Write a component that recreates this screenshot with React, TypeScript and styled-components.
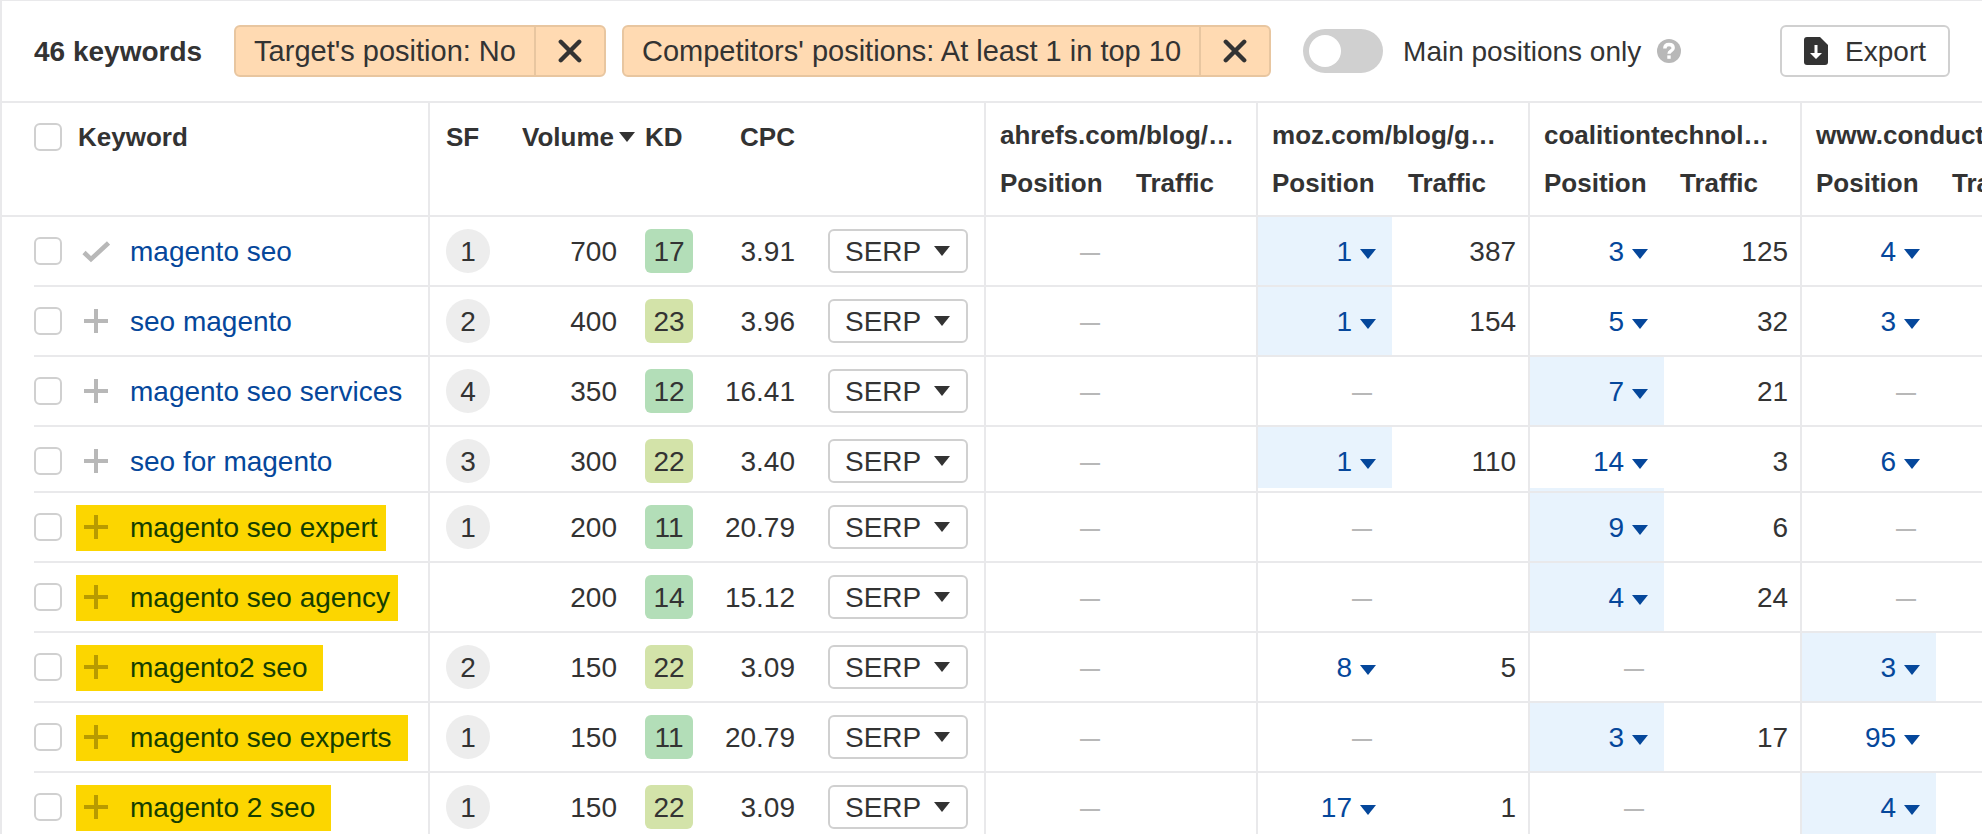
import React from "react";
import styled, { createGlobalStyle } from "styled-components";

const color = {
  text: "#333333",
  link: "#05479b",
  line: "#e9e9eb",
  control: "#d0d0d0",
  muted: "#b8b8b8",
  best: "#e8f3fd",
  chip: "#ffdab2",
  chipLine: "#e8c6a0",
  marker: "#fcd600",
};

const GlobalStyle = createGlobalStyle`
  *, *::before, *::after { box-sizing: border-box; }
  body {
    margin: 0;
    background: #fff;
    color: ${color.text};
    font: 28px/32px "Liberation Sans", Arial, sans-serif;
  }
  button, input { font: inherit; color: inherit; margin: 0; }
`;

const Page = styled.main`
  height: 100vh;
  overflow: hidden;
  border-top: 1px solid ${color.line};
  border-left: 2px solid ${color.line};
`;

const Toolbar = styled.header`
  display: flex;
  align-items: center;
  height: 102px;
  padding: 0 32px;
  border-bottom: 2px solid ${color.line};
  white-space: nowrap;
`;

const Count = styled.h1`
  margin: 0 32px 0 0;
  padding-top: 2px;
  font-size: 28px;
  line-height: 32px;
  font-weight: 700;
`;

const Chip = styled.div`
  display: flex;
  height: 52px;
  margin-right: 16px;
  border: 2px solid ${color.chipLine};
  border-radius: 6px;
  background: ${color.chip};
`;

const ChipLabel = styled.span`
  padding: 8px 18px;
  font-size: 29px;
`;

const ChipRemove = styled.button`
  display: flex;
  align-items: center;
  justify-content: center;
  width: 70px;
  padding: 0;
  border: 0;
  border-left: 2px solid ${color.chipLine};
  background: none;
`;

const SwitchLabel = styled.label`
  display: flex;
  align-items: center;
  gap: 20px;
  margin-left: 16px;
`;

const ControlText = styled.span`
  padding-top: 2px;
`;

const Switch = styled.input`
  appearance: none;
  display: flex;
  align-items: center;
  width: 80px;
  height: 44px;
  padding: 6px;
  border-radius: 22px;
  background: ${color.control};
  &::before {
    content: "";
    width: 32px;
    height: 32px;
    border-radius: 50%;
    background: #fff;
  }
  &:checked { justify-content: flex-end; }
`;

const HelpButton = styled.button`
  display: flex;
  margin-left: 16px;
  padding: 0;
  border: 0;
  background: none;
`;

const OutlineButton = styled.button`
  display: flex;
  align-items: center;
  border: 2px solid ${color.control};
  border-radius: 6px;
  background: #fff;
`;

const ExportButton = styled(OutlineButton)`
  gap: 17px;
  height: 52px;
  margin-left: auto;
  padding: 0 22px;
`;

const SerpButton = styled(OutlineButton)`
  justify-content: space-between;
  width: 140px;
  height: 44px;
  padding: 0 16px 0 15px;
`;

const TableScroll = styled.div`
  overflow-x: auto;
  scrollbar-width: none;
`;

const Table = styled.table`
  table-layout: fixed;
  width: 2070px;
  border-collapse: separate;
  border-spacing: 0;
`;

const Col = styled.col<{ $w: number }>`
  width: ${(p) => p.$w}px;
`;

const HeadCell = styled.th<{ $ruled?: boolean; $line?: boolean; $align?: string }>`
  padding: 20px 0 0;
  vertical-align: top;
  text-align: ${(p) => p.$align ?? "left"};
  font-size: 26px;
  line-height: 28px;
  font-weight: 700;
  white-space: nowrap;
  border-left: ${(p) => (p.$ruled ? `2px solid ${color.line}` : "0")};
  border-bottom: ${(p) => (p.$line === false ? "0" : `2px solid ${color.line}`)};
`;

const KeywordHead = styled(HeadCell)`
  padding-left: 32px;
`;

const HeadFlex = styled.div<{ $gap: number; $end?: boolean }>`
  display: flex;
  align-items: center;
  justify-content: ${(p) => (p.$end ? "flex-end" : "flex-start")};
  gap: ${(p) => p.$gap}px;
`;

const SfHead = styled(HeadCell)`
  padding-left: 16px;
`;

const VolumeHead = styled(HeadCell)`
  padding-right: 1px;
`;

const KdHead = styled(HeadCell)`
  padding-left: 9px;
`;

const CpcHead = styled(HeadCell)`
  padding-right: 11px;
`;

const DomainHead = styled(HeadCell)`
  height: 56px;
  padding: 18px 14px 0;
`;

const PositionHead = styled(HeadCell)`
  height: 58px;
  padding: 10px 0 0 14px;
`;

const TrafficHead = styled(PositionHead)`
  padding-left: 16px;
`;

const Row = styled.tr<{ $short?: boolean }>`
  height: ${(p) => (p.$short ? 66 : 70)}px;
`;

const Cell = styled.td<{ $ruled?: boolean }>`
  height: inherit;
  padding: 0;
  vertical-align: top;
  white-space: nowrap;
  border-left: ${(p) => (p.$ruled ? `2px solid ${color.line}` : "0")};
  border-bottom: 2px solid ${color.line};
`;

const KeywordCell = styled.td`
  height: inherit;
  padding: 0 0 0 32px;
  vertical-align: top;
  white-space: nowrap;
`;

const KeywordLine = styled.div<{ $short?: boolean }>`
  height: ${(p) => (p.$short ? 66 : 70)}px;
  border-bottom: 2px solid ${color.line};
`;

const Content = styled.div<{ $pad?: string; $end?: boolean; $short?: boolean }>`
  display: flex;
  align-items: center;
  justify-content: ${(p) => (p.$end ? "flex-end" : "flex-start")};
  height: 68px;
  margin-bottom: ${(p) => (p.$short ? -4 : 0)}px;
  padding: ${(p) => p.$pad ?? "0"};
`;

const CheckBox = styled.input`
  appearance: none;
  flex: none;
  width: 28px;
  height: 28px;
  border: 2px solid ${color.control};
  border-radius: 6px;
  background: #fff;
  &:checked { background: ${color.link}; }
`;

const Marked = styled.div<{ $mark?: "snug" | "loose" }>`
  display: flex;
  align-items: center;
  gap: 20px;
  height: 46px;
  margin: 2px 0 0 14px;
  padding: 0 ${(p) => (p.$mark === "snug" ? 8 : 16)}px 2px 6px;
  background: ${(p) => (p.$mark ? color.marker : "transparent")};
  color: ${(p) => (p.$mark ? "#b89b00" : color.muted)};
`;

const AddButton = styled.button`
  display: flex;
  padding: 0;
  border: 0;
  background: none;
`;

const KeywordLink = styled.a<{ $mark?: boolean }>`
  padding-top: 2px;
  color: ${(p) => (p.$mark ? "#143e00" : color.link)};
  text-decoration: none;
`;

const SfBadge = styled.span`
  width: 44px;
  height: 44px;
  border-radius: 50%;
  background: #ededed;
  line-height: 46px;
  text-align: center;
`;

const KdBadge = styled.span<{ $easy: boolean }>`
  width: 48px;
  height: 44px;
  border-radius: 6px;
  background: ${(p) => (p.$easy ? "#b3deb8" : "#d3e3a9")};
  line-height: 46px;
  text-align: center;
`;

type Band = "full" | "top" | "foot";

const bands: Record<Band, string> = {
  full: color.best,
  top: `linear-gradient(${color.best} 61px, transparent 0)`,
  foot: `linear-gradient(transparent 61px, ${color.best} 0)`,
};

const PositionCell = styled(Cell)<{ $band?: Band }>`
  background: ${(p) => (p.$band ? bands[p.$band] : "none")};
`;

const PositionButton = styled.button`
  display: flex;
  align-items: center;
  gap: 8px;
  padding: 0;
  border: 0;
  background: none;
  color: ${color.link};
  svg { margin-top: 4px; }
`;

const NoPosition = styled.span`
  padding: 0 4px 0 0;
  color: ${color.muted};
  font-size: 20px;
  font-weight: 700;
`;

const Caret = () => (
  <svg width="16" height="10" viewBox="0 0 16 10" aria-hidden="true">
    <path d="M0 0h16L8 10z" fill="currentColor" />
  </svg>
);

const CrossIcon = () => (
  <svg width="24" height="24" viewBox="0 0 24 24" aria-hidden="true">
    <path d="M2.800 2.800L21.200 21.200M21.200 2.800L2.800 21.200" stroke="currentColor" strokeWidth="4.400" strokeLinecap="round" fill="none" />
  </svg>
);

const PlusIcon = () => (
  <svg width="28" height="28" viewBox="0 0 28 28" aria-hidden="true">
    <path d="M14 2v24M2 14h24" stroke="currentColor" strokeWidth="4" fill="none" />
  </svg>
);

const CheckIcon = () => (
  <svg width="28" height="28" viewBox="0 0 28 28" aria-hidden="true">
    <path d="M2 15.500L9 22.200L26.500 6" stroke="currentColor" strokeWidth="4.600" fill="none" />
  </svg>
);

const HelpIcon = () => (
  <svg width="24" height="24" viewBox="0 0 24 24" aria-hidden="true">
    <circle cx="12" cy="12" r="12" fill="#b8b8b8" />
    <path d="M7.800 9.500c0-2.700 1.800-4 4.200-4s4.200 1.300 4.200 3.500c0 3-4.200 2.800-4.200 5.700" stroke="#fff" strokeWidth="3.400" fill="none" />
    <rect x="10.300" y="16.400" width="3.400" height="3.400" fill="#fff" />
  </svg>
);

const ExportIcon = () => (
  <svg width="24" height="28" viewBox="0 0 24 28" aria-hidden="true">
    <path d="M3 0h13l8 8v17a3 3 0 0 1-3 3H3a3 3 0 0 1-3-3V3a3 3 0 0 1 3-3z" fill="currentColor" />
    <path d="M10.500 8h3v8H18l-6 6-6-6h4.500z" fill="#fff" />
  </svg>
);

type Rank = { pos?: number; traffic?: number; band?: Band };
type Keyword = {
  text: string;
  added?: boolean;
  mark?: "snug" | "loose";
  short?: boolean;
  sf?: number;
  volume: number;
  kd: number;
  cpc: string;
  ranks: Rank[];
};

const domains = ["ahrefs.com/blog/…", "moz.com/blog/g…", "coalitiontechnol…", "www.conductor.c…"];

const keywords: Keyword[] = [
  { text: "magento seo", added: true, sf: 1, volume: 700, kd: 17, cpc: "3.91", ranks: [{}, { pos: 1, traffic: 387, band: "full" }, { pos: 3, traffic: 125 }, { pos: 4 }] },
  { text: "seo magento", sf: 2, volume: 400, kd: 23, cpc: "3.96", ranks: [{}, { pos: 1, traffic: 154, band: "full" }, { pos: 5, traffic: 32 }, { pos: 3 }] },
  { text: "magento seo services", sf: 4, volume: 350, kd: 12, cpc: "16.41", ranks: [{}, {}, { pos: 7, traffic: 21, band: "full" }, {}] },
  { text: "seo for magento", short: true, sf: 3, volume: 300, kd: 22, cpc: "3.40", ranks: [{}, { pos: 1, traffic: 110, band: "top" }, { pos: 14, traffic: 3, band: "foot" }, { pos: 6 }] },
  { text: "magento seo expert", mark: "snug", sf: 1, volume: 200, kd: 11, cpc: "20.79", ranks: [{}, {}, { pos: 9, traffic: 6, band: "full" }, {}] },
  { text: "magento seo agency", mark: "snug", volume: 200, kd: 14, cpc: "15.12", ranks: [{}, {}, { pos: 4, traffic: 24, band: "full" }, {}] },
  { text: "magento2 seo", mark: "loose", sf: 2, volume: 150, kd: 22, cpc: "3.09", ranks: [{}, { pos: 8, traffic: 5 }, {}, { pos: 3, band: "full" }] },
  { text: "magento seo experts", mark: "loose", sf: 1, volume: 150, kd: 11, cpc: "20.79", ranks: [{}, {}, { pos: 3, traffic: 17, band: "full" }, { pos: 95 }] },
  { text: "magento 2 seo", mark: "loose", sf: 1, volume: 150, kd: 22, cpc: "3.09", ranks: [{}, { pos: 17, traffic: 1 }, {}, { pos: 4, band: "full" }] },
];

const filters = ["Target's position: No", "Competitors' positions: At least 1 in top 10"];

function KeywordRow({ item }: { item: Keyword }) {
  const short = item.short;
  return (
    <Row $short={short}>
      <KeywordCell>
        <KeywordLine $short={short}>
          <Content $short={short}>
            <CheckBox type="checkbox" aria-label={`Select ${item.text}`} />
            <Marked $mark={item.mark}>
              <AddButton aria-label={item.added ? "In list" : "Add to list"}>
                {item.added ? <CheckIcon /> : <PlusIcon />}
              </AddButton>
              <KeywordLink href="#" $mark={!!item.mark}>{item.text}</KeywordLink>
            </Marked>
          </Content>
        </KeywordLine>
      </KeywordCell>
      <Cell $ruled>
        <Content $short={short} $pad="0 0 0 16px">{item.sf && <SfBadge>{item.sf}</SfBadge>}</Content>
      </Cell>
      <Cell>
        <Content $short={short} $end $pad="2px 19px 0 0">{item.volume}</Content>
      </Cell>
      <Cell>
        <Content $short={short} $pad="0 0 0 9px"><KdBadge $easy={item.kd < 20}>{item.kd}</KdBadge></Content>
      </Cell>
      <Cell>
        <Content $short={short} $end $pad="2px 11px 0 0">{item.cpc}</Content>
      </Cell>
      <Cell>
        <Content $short={short} $pad="0 0 0 22px">
          <SerpButton><ControlText>SERP</ControlText><Caret /></SerpButton>
        </Content>
      </Cell>
      {item.ranks.map((rank, i) => (
        <React.Fragment key={domains[i]}>
          <PositionCell $ruled $band={rank.band}>
            <Content $short={short} $end $pad="2px 16px 0 0">
              {rank.pos ? <PositionButton>{rank.pos}<Caret /></PositionButton> : <NoPosition>—</NoPosition>}
            </Content>
          </PositionCell>
          <Cell>
            <Content $short={short} $end $pad="2px 12px 0 0">{rank.traffic}</Content>
          </Cell>
        </React.Fragment>
      ))}
    </Row>
  );
}

export default function App() {
  return (
    <Page>
      <GlobalStyle />
      <Toolbar>
        <Count>46 keywords</Count>
        {filters.map((label) => (
          <Chip key={label}>
            <ChipLabel>{label}</ChipLabel>
            <ChipRemove aria-label={`Remove filter ${label}`}><CrossIcon /></ChipRemove>
          </Chip>
        ))}
        <SwitchLabel>
          <Switch type="checkbox" role="switch" />
          <ControlText>Main positions only</ControlText>
        </SwitchLabel>
        <HelpButton aria-label="About main positions"><HelpIcon /></HelpButton>
        <ExportButton><ExportIcon /><ControlText>Export</ControlText></ExportButton>
      </Toolbar>
      <TableScroll>
        <Table>
          <colgroup>
            {[426, 78, 130, 70, 100, 178].map((w, i) => <Col key={i} $w={w} />)}
            {domains.map((d) => (
              <React.Fragment key={d}><Col $w={136} /><Col $w={136} /></React.Fragment>
            ))}
          </colgroup>
          <thead>
            <tr>
              <KeywordHead rowSpan={2}>
                <HeadFlex $gap={16}>
                  <CheckBox type="checkbox" aria-label="Select all keywords" />
                  Keyword
                </HeadFlex>
              </KeywordHead>
              <SfHead $ruled rowSpan={2}>SF</SfHead>
              <VolumeHead rowSpan={2}>
                <HeadFlex $gap={5} $end>Volume<Caret /></HeadFlex>
              </VolumeHead>
              <KdHead rowSpan={2}>KD</KdHead>
              <CpcHead rowSpan={2} $align="right">CPC</CpcHead>
              <HeadCell as="td" rowSpan={2} />
              {domains.map((d) => (
                <DomainHead key={d} $ruled $line={false} colSpan={2}>{d}</DomainHead>
              ))}
            </tr>
            <tr>
              {domains.map((d) => (
                <React.Fragment key={d}>
                  <PositionHead $ruled>Position</PositionHead>
                  <TrafficHead>Traffic</TrafficHead>
                </React.Fragment>
              ))}
            </tr>
          </thead>
          <tbody>
            {keywords.map((item) => <KeywordRow key={item.text} item={item} />)}
          </tbody>
        </Table>
      </TableScroll>
    </Page>
  );
}
